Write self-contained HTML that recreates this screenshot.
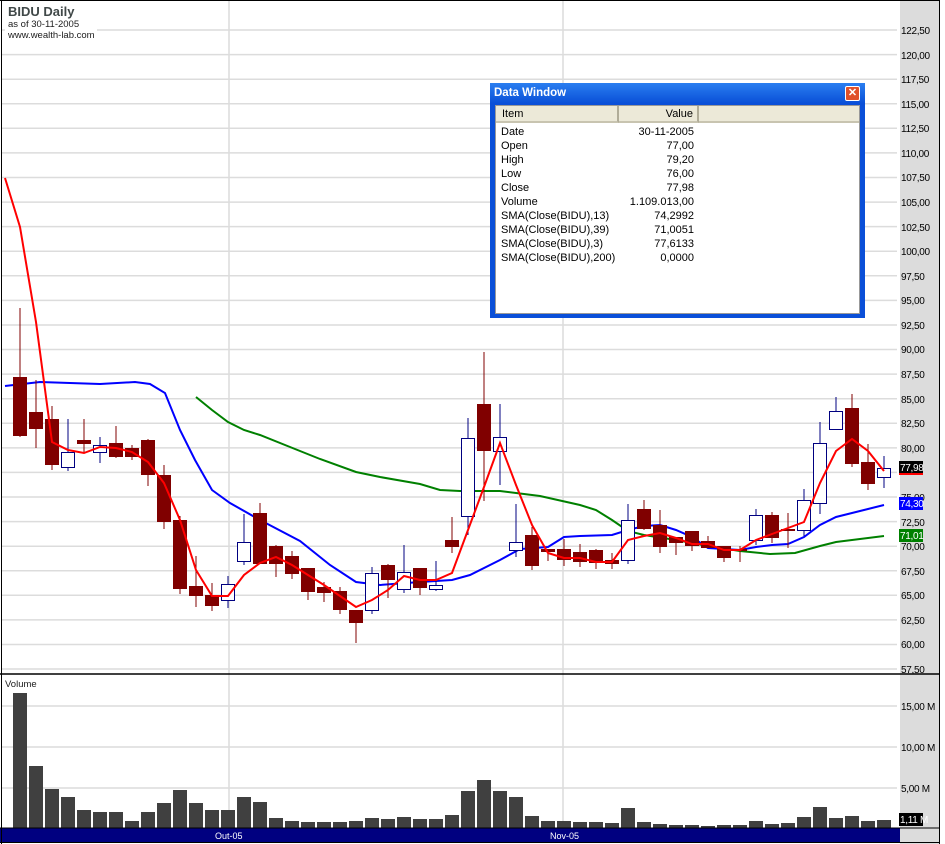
<!DOCTYPE html>
<html><head><meta charset="utf-8"><style>
html,body{margin:0;padding:0;background:#fff;}
body{width:945px;height:844px;position:relative;overflow:hidden;font-family:"Liberation Sans",sans-serif;}
svg{position:absolute;left:0;top:0}
.ax{font-size:10px;fill:#000;letter-spacing:-0.3px}
.dw{position:absolute;left:490px;top:83px;width:375px;height:235px;background:#0a4fd8;box-sizing:border-box;}
.dw .tb{position:absolute;left:0;top:0;width:375px;height:20px;background:linear-gradient(#2a7ef0,#0a50d8);color:#fff;font-weight:bold;font-size:11.5px;line-height:20px;padding-left:4px;box-sizing:border-box}
.dw .x{position:absolute;right:5px;top:3px;width:13px;height:13px;background:#e0502a;border:1px solid #fff;border-radius:2px;color:#fff;font-size:11px;line-height:12px;text-align:center;font-weight:bold}
.dw .in{position:absolute;left:5px;top:22px;width:365px;height:209px;background:#fff;border:1px solid #999;box-sizing:border-box}
.hd{position:absolute;top:0;height:17px;background:#ece9d8;border-right:2px solid #b0ac98;border-bottom:2px solid #c8c4b0;font-size:11px;line-height:17px;box-sizing:border-box}
.rw{position:absolute;font-size:11px;line-height:14px;color:#000}
</style></head><body>
<svg width="945" height="844" viewBox="0 0 945 844">
<rect x="900" y="0" width="40" height="844" fill="#dcdcdc"/>
<g stroke="#dcdcdc" stroke-width="1.5">
<line x1="2" y1="30" x2="897" y2="30"/><line x1="2" y1="54.6" x2="897" y2="54.6"/><line x1="2" y1="79.2" x2="897" y2="79.2"/><line x1="2" y1="103.7" x2="897" y2="103.7"/><line x1="2" y1="128.3" x2="897" y2="128.3"/><line x1="2" y1="152.9" x2="897" y2="152.9"/><line x1="2" y1="177.5" x2="897" y2="177.5"/><line x1="2" y1="202.1" x2="897" y2="202.1"/><line x1="2" y1="226.6" x2="897" y2="226.6"/><line x1="2" y1="251.2" x2="897" y2="251.2"/><line x1="2" y1="275.8" x2="897" y2="275.8"/><line x1="2" y1="300.4" x2="897" y2="300.4"/><line x1="2" y1="325" x2="897" y2="325"/><line x1="2" y1="349.5" x2="897" y2="349.5"/><line x1="2" y1="374.1" x2="897" y2="374.1"/><line x1="2" y1="398.7" x2="897" y2="398.7"/><line x1="2" y1="423.3" x2="897" y2="423.3"/><line x1="2" y1="447.9" x2="897" y2="447.9"/><line x1="2" y1="472.4" x2="897" y2="472.4"/><line x1="2" y1="497" x2="897" y2="497"/><line x1="2" y1="521.6" x2="897" y2="521.6"/><line x1="2" y1="546.2" x2="897" y2="546.2"/><line x1="2" y1="570.8" x2="897" y2="570.8"/><line x1="2" y1="595.3" x2="897" y2="595.3"/><line x1="2" y1="619.9" x2="897" y2="619.9"/><line x1="2" y1="644.5" x2="897" y2="644.5"/><line x1="2" y1="669" x2="897" y2="669"/>
<line x1="2" y1="706" x2="897" y2="706"/><line x1="2" y1="747" x2="897" y2="747"/><line x1="2" y1="788" x2="897" y2="788"/>
<line x1="229" y1="1" x2="229" y2="828"/><line x1="563" y1="1" x2="563" y2="828"/>
</g>
<g class="ax">
<text x="901" y="34">122,50</text><text x="901" y="59">120,00</text><text x="901" y="83">117,50</text><text x="901" y="108">115,00</text><text x="901" y="132">112,50</text><text x="901" y="157">110,00</text><text x="901" y="181">107,50</text><text x="901" y="206">105,00</text><text x="901" y="231">102,50</text><text x="901" y="255">100,00</text><text x="901" y="280">97,50</text><text x="901" y="304">95,00</text><text x="901" y="329">92,50</text><text x="901" y="353">90,00</text><text x="901" y="378">87,50</text><text x="901" y="403">85,00</text><text x="901" y="427">82,50</text><text x="901" y="452">80,00</text><text x="901" y="501">75,00</text><text x="901" y="526">72,50</text><text x="901" y="550">70,00</text><text x="901" y="575">67,50</text><text x="901" y="599">65,00</text><text x="901" y="624">62,50</text><text x="901" y="648">60,00</text><text x="901" y="673">57,50</text>
<text x="901" y="710">15,00 M</text><text x="901" y="751">10,00 M</text><text x="901" y="792">5,00 M</text>
</g>
<rect x="899" y="461" width="24" height="13" fill="#000"/><text x="900" y="471" class="ax" style="fill:#fff">77,98</text><line x1="899" y1="474" x2="923" y2="474" stroke="#f00" stroke-width="2"/>
<rect x="899" y="497" width="24" height="13" fill="#0000ff"/><text x="900" y="507" class="ax" style="fill:#fff">74,30</text>
<rect x="899" y="529" width="24" height="13" fill="#008000"/><text x="900" y="539" class="ax" style="fill:#fff">71,01</text>
<rect x="899" y="813" width="24" height="13" fill="#000"/><text x="900" y="823" class="ax" style="fill:#fff">1,11 M</text>
<!-- volume bars -->
<g fill="#404040">
<rect x="13" y="693" width="14" height="135"/><rect x="29" y="766" width="14" height="62"/><rect x="45" y="789" width="14" height="39"/><rect x="61" y="797" width="14" height="31"/><rect x="77" y="810" width="14" height="18"/><rect x="93" y="812" width="14" height="16"/><rect x="109" y="812" width="14" height="16"/><rect x="125" y="821" width="14" height="7"/><rect x="141" y="812" width="14" height="16"/><rect x="157" y="803" width="14" height="25"/><rect x="173" y="790" width="14" height="38"/><rect x="189" y="803" width="14" height="25"/><rect x="205" y="810" width="14" height="18"/><rect x="221" y="810" width="14" height="18"/><rect x="237" y="797" width="14" height="31"/><rect x="253" y="802" width="14" height="26"/><rect x="269" y="818" width="14" height="10"/><rect x="285" y="821" width="14" height="7"/><rect x="301" y="822" width="14" height="6"/><rect x="317" y="822" width="14" height="6"/><rect x="333" y="822" width="14" height="6"/><rect x="349" y="821" width="14" height="7"/><rect x="365" y="818" width="14" height="10"/><rect x="381" y="819" width="14" height="9"/><rect x="397" y="817" width="14" height="11"/><rect x="413" y="819" width="14" height="9"/><rect x="429" y="819" width="14" height="9"/><rect x="445" y="815" width="14" height="13"/><rect x="461" y="791" width="14" height="37"/><rect x="477" y="780" width="14" height="48"/><rect x="493" y="791" width="14" height="37"/><rect x="509" y="797" width="14" height="31"/><rect x="525" y="816" width="14" height="12"/><rect x="541" y="821" width="14" height="7"/><rect x="557" y="821" width="14" height="7"/><rect x="573" y="822" width="14" height="6"/><rect x="589" y="822" width="14" height="6"/><rect x="605" y="823" width="14" height="5"/><rect x="621" y="808" width="14" height="20"/><rect x="637" y="822" width="14" height="6"/><rect x="653" y="824" width="14" height="4"/><rect x="669" y="825" width="14" height="3"/><rect x="685" y="825" width="14" height="3"/><rect x="701" y="826" width="14" height="2"/><rect x="717" y="825" width="14" height="3"/><rect x="733" y="825" width="14" height="3"/><rect x="749" y="821" width="14" height="7"/><rect x="765" y="824" width="14" height="4"/><rect x="781" y="823" width="14" height="5"/><rect x="797" y="817" width="14" height="11"/><rect x="813" y="807" width="14" height="21"/><rect x="829" y="818" width="14" height="10"/><rect x="845" y="816" width="14" height="12"/><rect x="861" y="821" width="14" height="7"/><rect x="877" y="820" width="14" height="8"/>
</g>
<!-- SMA39 green, SMA13 blue -->
<polyline fill="none" stroke="#008000" stroke-width="2" points="196,397 212,410 228,422 244,430 260,435 290,447 320,459 356,472 380,477 420,484 440,490 460,491 500,491 540,496 580,505 596,510 612,520 628,531 644,535 676,540 708,546 740,551 770,554 795,553 820,546 836,542 852,540 868,538 884,536"/>
<polyline fill="none" stroke="#0000ff" stroke-width="2" points="5,386 40,382 70,383 100,384 135,382 150,384 165,393 180,430 195,460 212,490 230,503 260,520 300,541 330,565 356,582 380,585 420,582 452,580 470,575 500,560 520,549 548,547 564,537 580,536 612,535 628,530 644,526 660,525 676,530 692,537 708,548 740,550 756,547 772,545 788,544 804,537 820,525 836,517 852,513 868,509 884,505"/>
<!-- candles -->
<g stroke-width="1">
<g stroke="#800000">
<line x1="20" y1="308" x2="20" y2="437"/><line x1="36" y1="380" x2="36" y2="448"/><line x1="52" y1="406" x2="52" y2="470"/><line x1="84" y1="419" x2="84" y2="453"/><line x1="116" y1="426" x2="116" y2="458"/><line x1="132" y1="445" x2="132" y2="460"/><line x1="148" y1="439" x2="148" y2="486"/><line x1="164" y1="465" x2="164" y2="529"/><line x1="180" y1="516" x2="180" y2="594"/><line x1="196" y1="556" x2="196" y2="607"/><line x1="212" y1="583" x2="212" y2="611"/><line x1="260" y1="503" x2="260" y2="564"/><line x1="276" y1="545" x2="276" y2="577"/><line x1="292" y1="551" x2="292" y2="579"/><line x1="308" y1="568" x2="308" y2="600"/><line x1="324" y1="582" x2="324" y2="602"/><line x1="340" y1="587" x2="340" y2="614"/><line x1="356" y1="610" x2="356" y2="643"/><line x1="388" y1="564" x2="388" y2="598"/><line x1="420" y1="568" x2="420" y2="595"/><line x1="452" y1="517" x2="452" y2="553"/><line x1="484" y1="352" x2="484" y2="501"/><line x1="532" y1="527" x2="532" y2="570"/><line x1="548" y1="549" x2="548" y2="561"/><line x1="564" y1="539" x2="564" y2="566"/><line x1="580" y1="544" x2="580" y2="567"/><line x1="596" y1="549" x2="596" y2="569"/><line x1="612" y1="553" x2="612" y2="569"/><line x1="644" y1="500" x2="644" y2="530"/><line x1="660" y1="510" x2="660" y2="553"/><line x1="676" y1="537" x2="676" y2="555"/><line x1="692" y1="531" x2="692" y2="551"/><line x1="708" y1="536" x2="708" y2="548"/><line x1="724" y1="546" x2="724" y2="562"/><line x1="740" y1="546" x2="740" y2="562"/><line x1="772" y1="512" x2="772" y2="543"/><line x1="788" y1="513" x2="788" y2="548"/><line x1="852" y1="394" x2="852" y2="467"/><line x1="868" y1="444" x2="868" y2="490"/>
</g>
<g fill="#800000">
<rect x="13" y="377" width="14" height="59"/><rect x="29" y="412" width="14" height="17"/><rect x="45" y="419" width="14" height="46"/><rect x="77" y="440" width="14" height="4"/><rect x="109" y="443" width="14" height="14"/><rect x="125" y="448" width="14" height="9"/><rect x="141" y="440" width="14" height="35"/><rect x="157" y="475" width="14" height="47"/><rect x="173" y="520" width="14" height="69"/><rect x="189" y="586" width="14" height="10"/><rect x="205" y="595" width="14" height="11"/><rect x="253" y="513" width="14" height="51"/><rect x="269" y="546" width="14" height="18"/><rect x="285" y="556" width="14" height="18"/><rect x="301" y="568" width="14" height="24"/><rect x="317" y="587" width="14" height="6"/><rect x="333" y="591" width="14" height="19"/><rect x="349" y="610" width="14" height="13"/><rect x="381" y="565" width="14" height="15"/><rect x="413" y="568" width="14" height="20"/><rect x="445" y="540" width="14" height="7"/><rect x="477" y="404" width="14" height="47"/><rect x="525" y="535" width="14" height="31"/><rect x="541" y="549" width="14" height="3"/><rect x="557" y="549" width="14" height="11"/><rect x="573" y="552" width="14" height="10"/><rect x="589" y="550" width="14" height="13"/><rect x="605" y="560" width="14" height="4"/><rect x="637" y="509" width="14" height="20"/><rect x="653" y="525" width="14" height="22"/><rect x="669" y="537" width="14" height="6"/><rect x="685" y="531" width="14" height="15"/><rect x="701" y="541" width="14" height="7"/><rect x="717" y="546" width="14" height="12"/><rect x="733" y="549" width="14" height="2"/><rect x="765" y="515" width="14" height="23"/><rect x="781" y="529" width="14" height="2"/><rect x="845" y="408" width="14" height="56"/><rect x="861" y="462" width="14" height="22"/>
</g>
<g stroke="#000080">
<line x1="68" y1="419" x2="68" y2="471"/><line x1="100" y1="437" x2="100" y2="463"/><line x1="228" y1="576" x2="228" y2="608"/><line x1="244" y1="514" x2="244" y2="565"/><line x1="372" y1="567" x2="372" y2="614"/><line x1="404" y1="545" x2="404" y2="593"/><line x1="436" y1="561" x2="436" y2="591"/><line x1="468" y1="418" x2="468" y2="535"/><line x1="500" y1="404" x2="500" y2="485"/><line x1="516" y1="504" x2="516" y2="557"/><line x1="628" y1="504" x2="628" y2="564"/><line x1="756" y1="509" x2="756" y2="545"/><line x1="804" y1="489" x2="804" y2="536"/><line x1="820" y1="422" x2="820" y2="514"/><line x1="836" y1="397" x2="836" y2="429"/><line x1="884" y1="456" x2="884" y2="488"/>
</g>
<g fill="#fff" stroke="#000080">
<rect x="61.5" y="452.5" width="13" height="15"/><rect x="93.5" y="445.5" width="13" height="7"/><rect x="221.5" y="584.5" width="13" height="16"/><rect x="237.5" y="542.5" width="13" height="19"/><rect x="365.5" y="573.5" width="13" height="37"/><rect x="397.5" y="572.5" width="13" height="17"/><rect x="429.5" y="585.5" width="13" height="4"/><rect x="461.5" y="438.5" width="13" height="78"/><rect x="493.5" y="437.5" width="13" height="14"/><rect x="509.5" y="542.5" width="13" height="8"/><rect x="621.5" y="520.5" width="13" height="40"/><rect x="749.5" y="515.5" width="13" height="25"/><rect x="797.5" y="500.5" width="13" height="30"/><rect x="813.5" y="443.5" width="13" height="60"/><rect x="829.5" y="411.5" width="13" height="18"/><rect x="877.5" y="468.5" width="13" height="9"/>
</g>
</g>
<!-- SMA3 red -->
<polyline fill="none" stroke="#ff0000" stroke-width="2" points="5,178 20,227 36,322 52,442 68,450 84,453 100,447 116,448 132,452 148,462 164,483 180,520 196,570 212,596 228,596 244,575 260,563 276,557 292,565 308,575 324,585 340,596 356,607 372,600 388,590 404,576 420,580 436,580 452,573 468,530 484,487 500,443 516,485 532,525 548,553 564,558 580,558 596,562 612,562 628,540 644,536 660,533 676,538 692,544 708,544 724,550 740,550 756,540 772,534 788,528 804,522 820,483 836,451 852,439 868,451 884,471"/>
<!-- frame -->
<rect x="0" y="828" width="900" height="14" fill="#000080"/>
<text x="215" y="839" font-size="9" fill="#fff">Out-05</text>
<text x="550" y="839" font-size="9" fill="#fff">Nov-05</text>
<line x1="0" y1="674" x2="940" y2="674" stroke="#000" stroke-width="1.5"/>
<line x1="0" y1="828" x2="940" y2="828" stroke="#000" stroke-width="1"/>
<line x1="0" y1="842.5" x2="940" y2="842.5" stroke="#000" stroke-width="1"/>
<line x1="0" y1="0.5" x2="940" y2="0.5" stroke="#000" stroke-width="1"/>
<line x1="1.5" y1="0" x2="1.5" y2="844" stroke="#000" stroke-width="1"/>
<line x1="939.5" y1="0" x2="939.5" y2="844" stroke="#000" stroke-width="1"/>
<rect x="5" y="28" width="92" height="10" fill="#fff"/>
<text x="8" y="16" font-size="13" font-weight="bold" fill="#404848">BIDU Daily</text>
<text x="8" y="27" font-size="9.5" fill="#202020">as of 30-11-2005</text>
<text x="8" y="38" font-size="9.5" fill="#202020">www.wealth-lab.com</text>
<text x="5" y="687" font-size="9.5" fill="#202020">Volume</text>
</svg>
<div class="dw">
<div class="tb">Data Window</div><div class="x">✕</div>
<div class="in">
<div class="hd" style="left:0;width:123px;padding-left:6px">Item</div>
<div class="hd" style="left:123px;width:80px;text-align:right;padding-right:4px">Value</div>
<div class="hd" style="left:203px;width:160px;border-right:none"></div>
<div class="rw" style="left:5px;top:19px">Date<br>Open<br>High<br>Low<br>Close<br>Volume<br>SMA(Close(BIDU),13)<br>SMA(Close(BIDU),39)<br>SMA(Close(BIDU),3)<br>SMA(Close(BIDU),200)</div>
<div class="rw" style="left:120px;width:78px;top:19px;text-align:right">30-11-2005<br>77,00<br>79,20<br>76,00<br>77,98<br>1.109.013,00<br>74,2992<br>71,0051<br>77,6133<br>0,0000</div>
</div>
</div>
</body></html>
